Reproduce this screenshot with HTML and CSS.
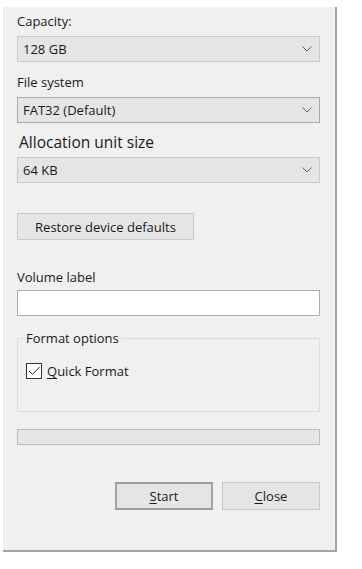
FILE: index.html
```html
<!DOCTYPE html>
<html lang="en">
<head>
    <meta charset="UTF-8">
    <meta name="viewport" content="width=device-width, initial-scale=1.0">
    <title>Format USB Drive</title>
    <link rel="stylesheet" href="styles.css">
</head>
<body>
    <div class="window">
        <div class="label">Capacity:</div>
        <div class="combo">
            <span>128 GB</span>
            <svg class="chevron" width="10" height="6" viewBox="0 0 10 6"><polyline points="0.5,0.5 5,5 9.5,0.5"/></svg>
        </div>

        <div class="label label-gap">File system</div>
        <div class="combo combo-focus">
            <span>FAT32 (Default)</span>
            <svg class="chevron" width="10" height="6" viewBox="0 0 10 6"><polyline points="0.5,0.5 5,5 9.5,0.5"/></svg>
        </div>

        <div class="label label-large">Allocation unit size</div>
        <div class="combo combo-tight">
            <span>64 KB</span>
            <svg class="chevron" width="10" height="6" viewBox="0 0 10 6"><polyline points="0.5,0.5 5,5 9.5,0.5"/></svg>
        </div>

        <button class="button restore">Restore device defaults</button>

        <div class="label volume-label">Volume label</div>
        <input class="text-input" type="text">

        <fieldset class="group">
            <legend>Format options</legend>
            <div class="group-body">
                <label class="check-row">
                    <span class="checkbox">
                        <svg width="14" height="14" viewBox="0 0 14 14"><polyline points="2,7 5.5,10.5 12.5,3"/></svg>
                    </span>
                    <span><u>Q</u>uick Format</span>
                </label>
            </div>
        </fieldset>

        <div class="progress"></div>

        <div class="actions">
            <button class="button default"><u>S</u>tart</button>
            <button class="button"><u>C</u>lose</button>
        </div>
    </div>
</body>
</html>
```

FILE: styles.css
```css
* {
    margin: 0;
    padding: 0;
    box-sizing: border-box;
}

:root {
    --face: #f0f0f0;
    --control: #e5e5e5;
    --edge: #c9c9c9;
    --edge-dark: #a9a9a9;
    --text: #1a1a1a;
}

body {
    background: #fff;
    color: var(--text);
    font-family: 'Open Sans', 'Noto Sans', sans-serif;
    font-size: 13px;
}

/* Dialog frame */
.window {
    margin: 7px 0 0 3px;
    width: 334px;
    height: 545px;
    padding: 5px 15px 0 14px;
    background: var(--face);
    border-right: 2px solid #a4a4a4;
    border-bottom: 2px solid #a4a4a4;
}

.label {
    height: 18px;
    line-height: 18px;
}

.label-gap {
    margin-top: 11px;
}

.label-large {
    margin-top: 9px;
    height: 20px;
    line-height: 20px;
    font-size: 15.5px;
    padding-left: 2px;
}

.volume-label {
    margin-top: 28px;
}

/* Drop-down boxes */
.combo {
    margin-top: 6px;
    height: 26px;
    padding: 0 7px 0 5px;
    display: flex;
    align-items: center;
    justify-content: space-between;
    background: var(--control);
    border: 1px solid var(--edge);
}

.combo-focus {
    border-color: var(--edge-dark);
}

.combo-tight {
    margin-top: 5px;
}

.chevron polyline {
    fill: none;
    stroke: #606060;
    stroke-width: 1;
}

/* Push buttons */
.button {
    display: block;
    height: 28px;
    font-family: inherit;
    font-size: 13px;
    color: var(--text);
    background: var(--control);
    border: 1px solid var(--edge);
}

.restore {
    margin-top: 30px;
    width: 177px;
    height: 27px;
}

.default {
    border: 2px solid #9f9f9f;
}

.text-input {
    display: block;
    margin-top: 4px;
    width: 100%;
    height: 26px;
    background: #fff;
    border: 1px solid #aeaeae;
    outline: none;
}

/* Format options group */
.group {
    margin-top: 13px;
    padding: 0 6px;
    border: 1px solid #dcdcdc;
}

.group legend {
    padding: 0 2px;
    line-height: 18px;
}

.group-body {
    height: 64px;
    padding: 15px 0 0 2px;
}

.check-row {
    display: flex;
    align-items: center;
    gap: 5px;
}

.checkbox {
    width: 16px;
    height: 16px;
    display: flex;
    align-items: center;
    justify-content: center;
    background: #fff;
    border: 1px solid #333;
}

.checkbox polyline {
    fill: none;
    stroke: #333;
    stroke-width: 1;
}

.progress {
    margin-top: 17px;
    height: 16px;
    background: #e6e6e6;
    border: 1px solid #bcbcbc;
}

.actions {
    margin-top: 37px;
    display: flex;
    justify-content: flex-end;
    gap: 9px;
}

.actions .button {
    width: 98px;
}

u {
    text-underline-offset: 2px;
}
```
